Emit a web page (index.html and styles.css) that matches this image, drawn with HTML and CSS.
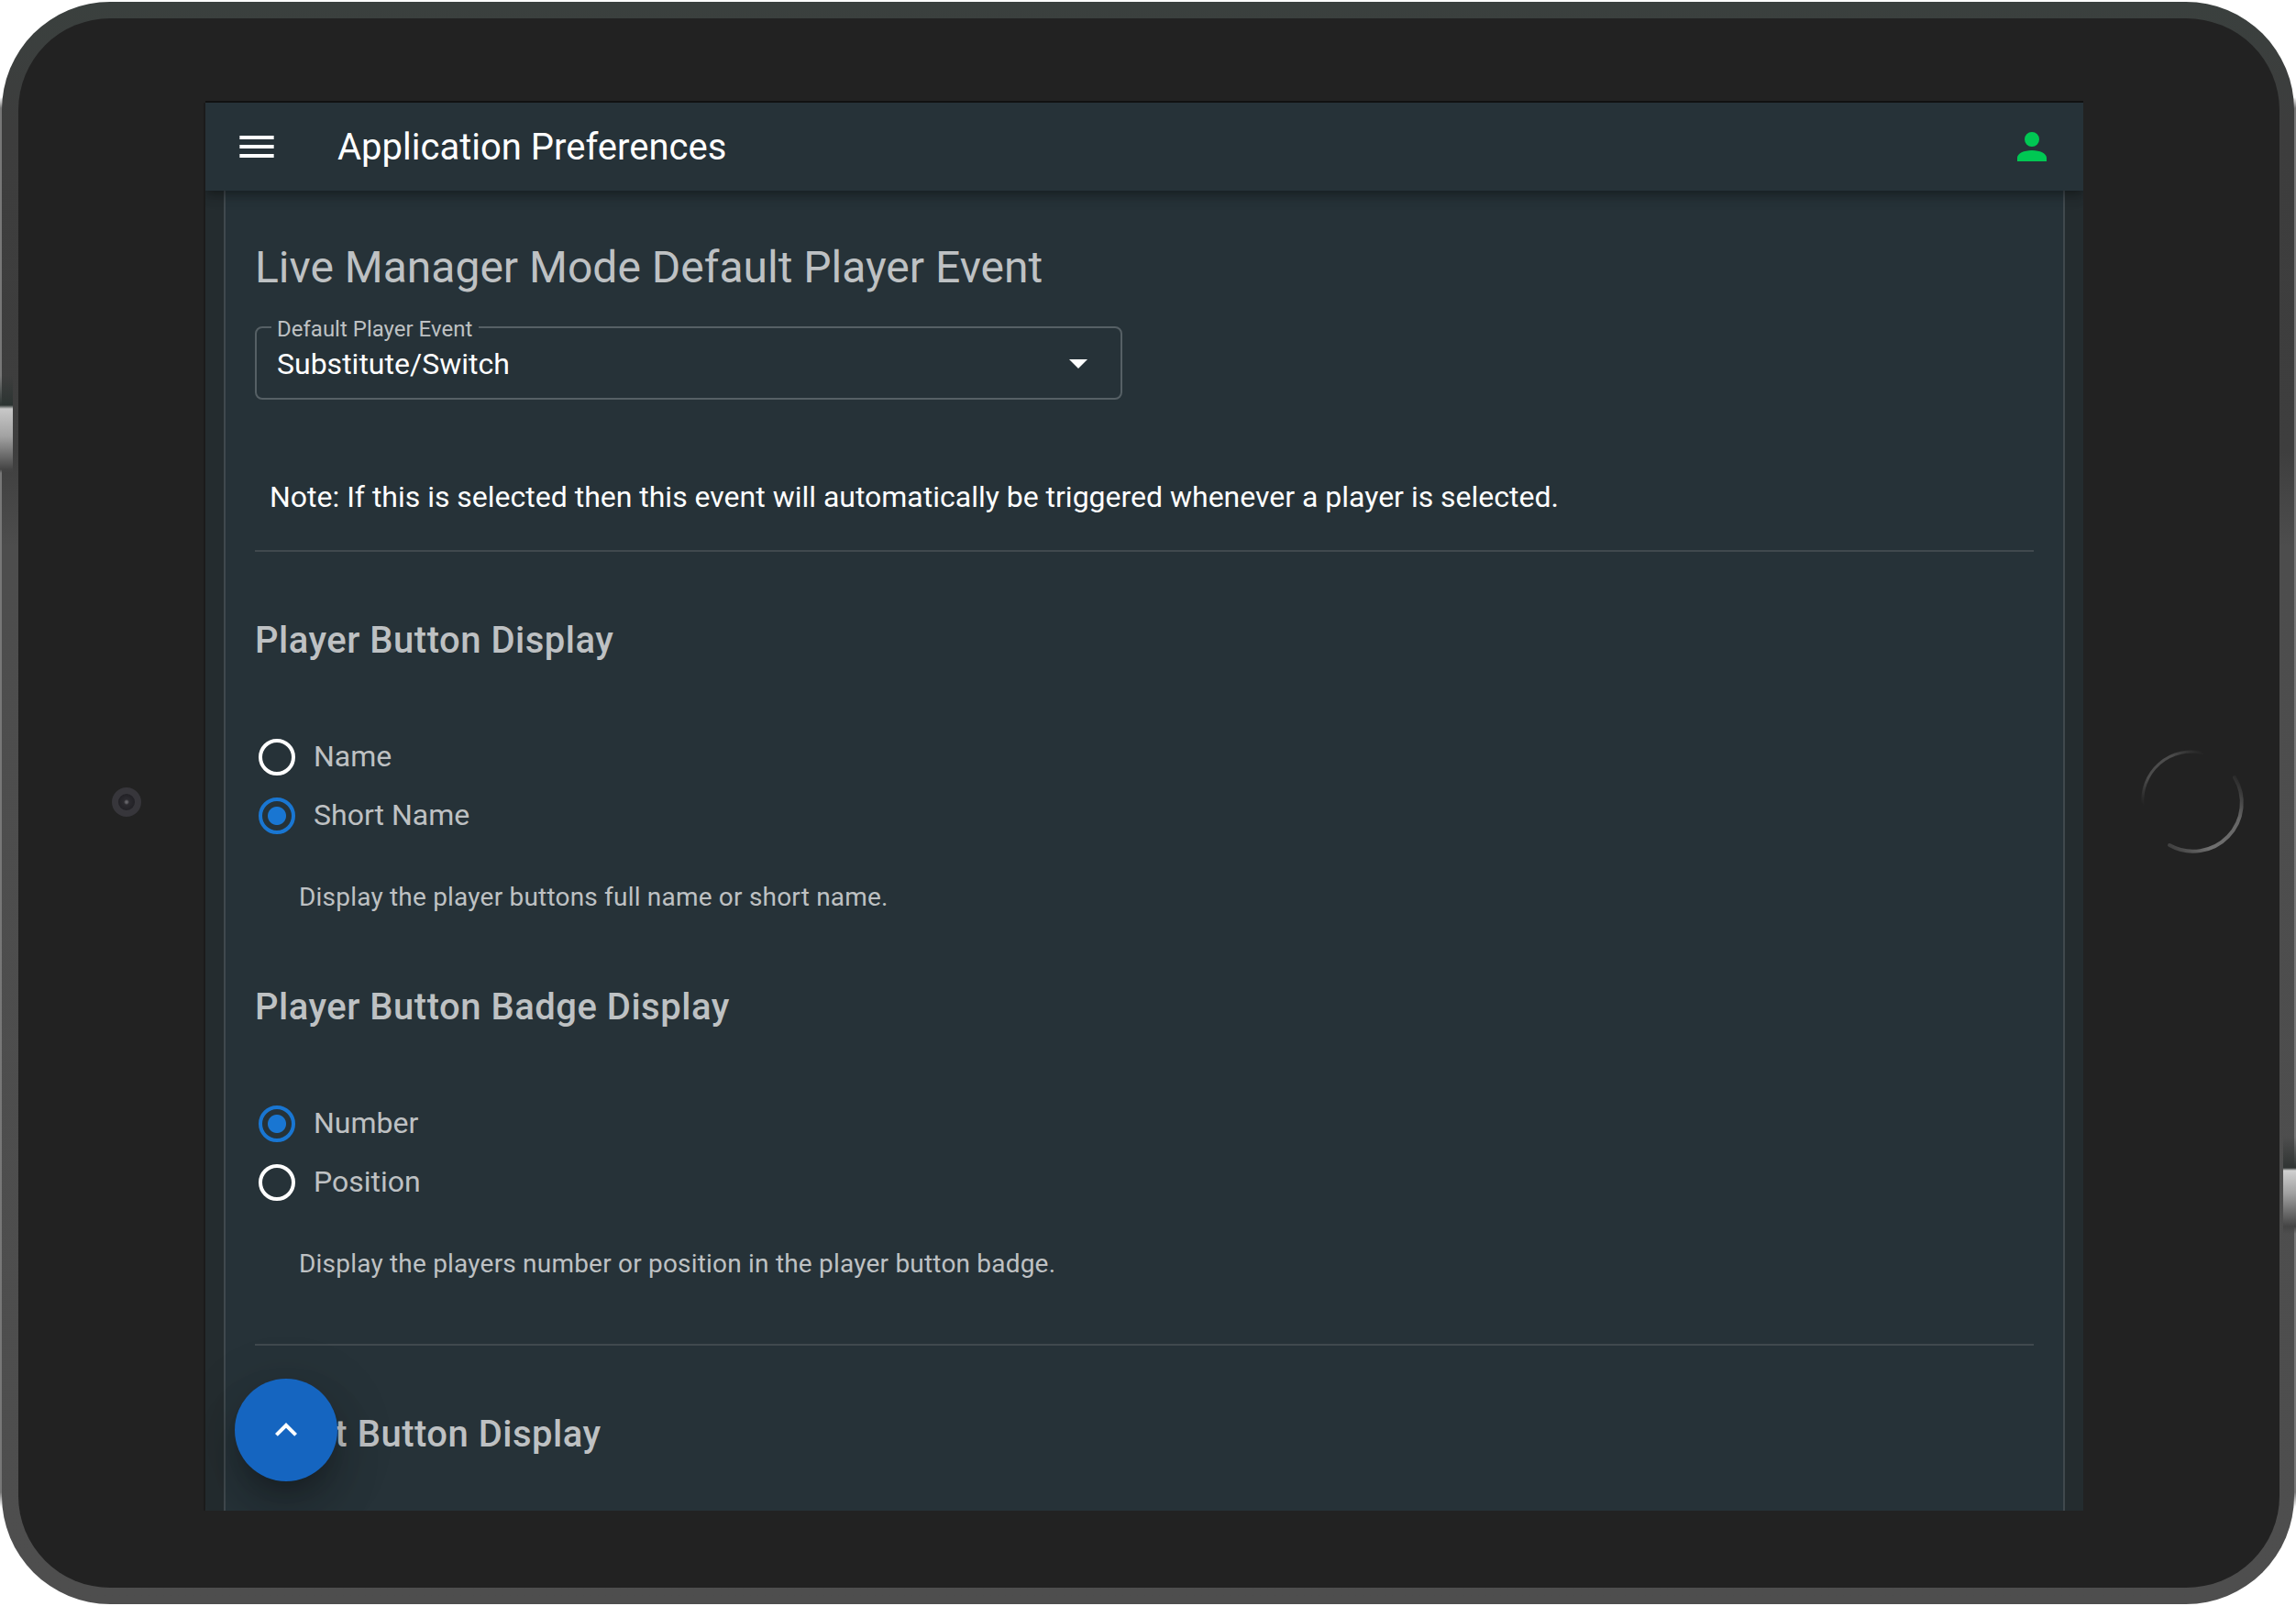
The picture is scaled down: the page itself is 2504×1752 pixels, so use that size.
FILE: index.html
```html
<!DOCTYPE html>
<html lang="en">
<head>
<meta charset="utf-8">
<title>Application Preferences</title>
<link rel="stylesheet" href="styles.css">
</head>
<body>
<div class="tablet">
  <div class="bezel">
    <div class="side side-left"><span class="camera"></span></div>
    <div class="screen">
      <header class="app-bar">
        <svg class="icon menu" viewBox="0 0 24 24"><path d="M2.67,6H21.33V8H2.67V6M2.67,11H21.33V13H2.67V11M2.67,16H21.33V18H2.67V16Z"/></svg>
        <h1 class="app-title">Application Preferences</h1>
        <svg class="icon account" viewBox="0 0 24 24"><path d="M12,4A4,4 0 0,1 16,8A4,4 0 0,1 12,12A4,4 0 0,1 8,8A4,4 0 0,1 12,4M12,14C16.42,14 20,15.79 20,18V20H4V18C4,15.79 7.58,14 12,14Z"/></svg>
      </header>
      <main class="card">
        <h2 class="headline">Live Manager Mode Default Player Event</h2>
        <div class="select">
          <span class="select-label">Default Player Event</span>
          <span class="select-value">Substitute/Switch</span>
          <svg class="icon" viewBox="0 0 24 24"><path d="M7,10L12,15L17,10H7Z"/></svg>
        </div>
        <p class="note">Note: If this is selected then this event will automatically be triggered whenever a player is selected.</p>
        <hr class="divider">
        <section class="group">
          <h3 class="title">Player Button Display</h3>
          <label class="option"><i class="radio"></i><span>Name</span></label>
          <label class="option"><i class="radio checked"></i><span>Short Name</span></label>
          <p class="hint">Display the player buttons full name or short name.</p>
        </section>
        <section class="group">
          <h3 class="title">Player Button Badge Display</h3>
          <label class="option"><i class="radio checked"></i><span>Number</span></label>
          <label class="option"><i class="radio"></i><span>Position</span></label>
          <p class="hint">Display the players number or position in the player button badge.</p>
        </section>
        <hr class="divider last">
        <h3 class="title event-title">Event Button Display</h3>
      </main>
      <div class="fab"><svg class="icon" viewBox="0 0 24 24"><path d="M7.41,15.41L12,10.83L16.59,15.41L18,14L12,8L6,14L7.41,15.41Z"/></svg></div>
    </div>
    <div class="side side-right">
      <svg class="home" viewBox="0 0 120 120">
        <defs>
          <linearGradient id="arcTop" x1="0" y1="1" x2="1" y2="0"><stop offset="0" stop-color="#222"/><stop offset=".3" stop-color="#4c4c4c"/><stop offset=".7" stop-color="#4c4c4c"/><stop offset="1" stop-color="#222"/></linearGradient>
          <linearGradient id="arcBottom" x1="0" y1="1" x2="1" y2="0"><stop offset="0" stop-color="#3a3a3a"/><stop offset=".3" stop-color="#707070"/><stop offset=".7" stop-color="#666"/><stop offset="1" stop-color="#222"/></linearGradient>
        </defs>
        <path d="M5,64A53,53 0 0,1 70,7.500" stroke="url(#arcTop)" stroke-width="3"/>
        <path d="M34,108A53,53 0 0,0 105,34" stroke="url(#arcBottom)" stroke-width="4"/>
      </svg>
    </div>
  </div>
  <span class="glint glint-left"></span>
  <span class="glint glint-right"></span>
</div>
</body>
</html>
```

FILE: styles.css
```css
* { box-sizing: border-box; }
body {
  margin: 0;
  background: #fff;
  font-family: Roboto, "Liberation Sans", sans-serif;
  color: #fff;
}
h1, h2, h3, p { margin: 0; font-weight: 400; }

/* device frame */
.tablet {
  position: relative;
  width: 2504px;
  height: 1752px;
  padding: 2px;
  background: linear-gradient(transparent, #777 12px, #777 1522px, transparent) 0 106px / 100% 1538px no-repeat;
}
.bezel {
  display: flex;
  height: 1748px;
  padding-top: 92px;
  border: solid transparent;
  border-width: 18px 16px 18px 18px;
  border-radius: 118px;
  background:
    linear-gradient(#222, #222) padding-box,
    linear-gradient(#3a403e 0, #3d3d3d 8%, #3e3e3e 28%, #4d4d4d 34%, #4e4e4e 100%) border-box;
}
.side { display: flex; align-items: center; height: 1536px; }
.side-left {
  width: 204px;
  padding-left: 102px;
  box-shadow: inset -2px 0 #1b1b1b;
}
.side-right { flex: 1; padding-left: 60px; }
.camera {
  width: 32px;
  height: 32px;
  margin-top: -10px;
  border: 7px solid #37363b;
  border-radius: 50%;
  background: radial-gradient(#66656a 0 1px, #2c2b30 3px, #222126 9px);
}
.home { width: 120px; height: 120px; margin-top: -12px; fill: none; stroke-linecap: round; }
.glint { position: absolute; width: 14px; }
.glint-left {
  left: 0;
  top: 410px;
  height: 106px;
  background: linear-gradient(transparent, #2c3432 32px, #c8c8c8 36px, #a2a2a2 66px, #444 102px, transparent);
}
.glint-right {
  right: 0;
  top: 1240px;
  height: 106px;
  background: linear-gradient(transparent, #303433 34px, #d0d0d0 37px, #a0a0a0 62px, #444 98px, transparent);
}

/* application */
.screen {
  position: relative;
  display: flex;
  flex-direction: column;
  width: 2048px;
  height: 1538px;
  margin-top: -2px;
  padding: 0 20px;
  overflow: hidden;
  border-top: 2px solid #111;
  background: #242c2f;
}
.app-bar {
  z-index: 1;
  flex: none;
  display: flex;
  align-items: center;
  height: 96px;
  margin: 0 -20px;
  padding: 0 32px;
  background: #263238;
  box-shadow: 0 4px 8px -2px rgba(0,0,0,.2), 0 8px 10px rgba(0,0,0,.14), 0 2px 20px rgba(0,0,0,.12);
}
.icon { flex: none; width: 48px; height: 48px; fill: #fff; }
.app-title { flex: 1; margin-left: 64px; padding-top: 1px; font-size: 40px; line-height: 47px; }
.account { fill: #00c853; }

.card {
  flex: 1;
  padding: 48px 32px 0;
  border: solid #40494e;
  border-width: 0 2px;
  background: #263238;
}
.headline { padding-top: 4px; font-size: 48px; line-height: 63px; color: #bec1c3; }
.select {
  position: relative;
  display: flex;
  align-items: center;
  justify-content: space-between;
  width: 946px;
  height: 80px;
  margin-top: 33px;
  padding: 0 22px;
  border: 2px solid #566065;
  border-radius: 8px;
}
.select-label {
  position: absolute;
  left: 16px;
  top: -15px;
  padding: 0 7px 0 6px;
  background: #263238;
  color: #bec1c3;
  font-size: 24px;
  line-height: 32px;
}
.select-value { padding-top: 2px; font-size: 32px; line-height: 40px; }
.note { padding: 82px 16px 0; font-size: 32px; line-height: 48px; letter-spacing: -.01px; }
.divider { height: 2px; margin: 34px 0 0; border: 0; background: #40494e; }
.title {
  padding-top: 1px;
  font-size: 40px;
  font-weight: 500;
  line-height: 63px;
  letter-spacing: .5px;
  color: #bec1c3;
}
.group { height: 400px; padding-top: 64px; color: #bec1c3; }
.group .title { margin-bottom: 64px; }
.option { display: flex; align-items: center; height: 64px; gap: 20px; padding-left: 4px; font-size: 32px; }
.option span { padding-bottom: 2px; }
.radio { flex: none; width: 40px; height: 40px; border: 4px solid #fff; border-radius: 50%; }
.radio.checked { border-color: #1976d2; background: radial-gradient(#1976d2 9.5px, transparent 10.5px); }
.hint { padding: 35px 48px 0; font-size: 28px; line-height: 43px; letter-spacing: .2px; }
.divider.last { margin-top: 64px; }
.event-title { padding-top: 65px; }
.fab {
  position: absolute;
  left: 32px;
  bottom: 32px;
  display: flex;
  align-items: center;
  justify-content: center;
  width: 112px;
  height: 112px;
  border-radius: 50%;
  background: #1565c0;
  box-shadow: 0 16px 20px -10px rgba(0,0,0,.2), 0 32px 48px 4px rgba(0,0,0,.14), 0 12px 60px 10px rgba(0,0,0,.12);
}
```
